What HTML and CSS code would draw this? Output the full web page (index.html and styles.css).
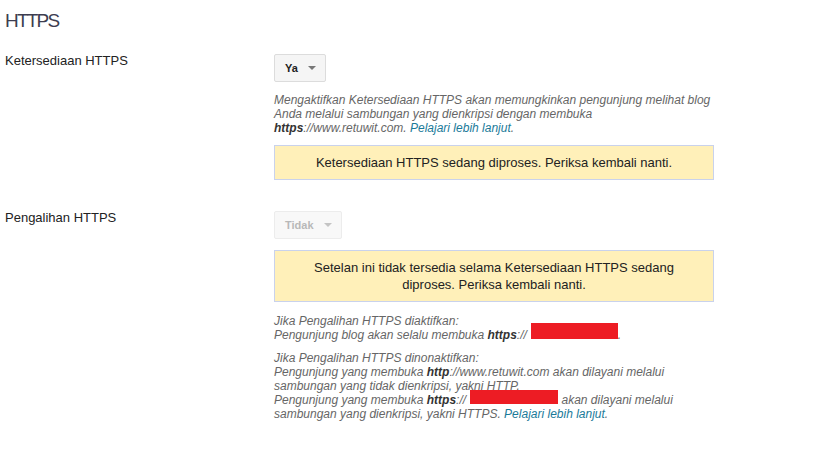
FILE: index.html
```html
<!DOCTYPE html>
<html lang="id">
<head>
    <meta charset="UTF-8">
    <meta name="viewport" content="width=device-width, initial-scale=1.0">
    <title>HTTPS</title>
    <link rel="stylesheet" href="styles.css">
</head>
<body>
    <div class="page">
        <h1>HTTPS</h1>

        <!-- Ketersediaan -->
        <div class="setting">
            <div class="setting-label">Ketersediaan HTTPS</div>
            <div class="setting-body">
                <button class="dropdown">Ya <span class="caret"></span></button>
                <p class="help">Mengaktifkan Ketersediaan HTTPS akan memungkinkan pengunjung melihat blog Anda melalui sambungan yang dienkripsi dengan membuka <b>https</b>://www.retuwit.com. <a href="#">Pelajari lebih lanjut</a>.</p>
                <div class="notice">Ketersediaan HTTPS sedang diproses. Periksa kembali nanti.</div>
            </div>
        </div>

        <!-- Pengalihan -->
        <div class="setting second">
            <div class="setting-label">Pengalihan HTTPS</div>
            <div class="setting-body">
                <button class="dropdown" disabled>Tidak <span class="caret"></span></button>
                <div class="notice">Setelan ini tidak tersedia selama Ketersediaan HTTPS sedang diproses. Periksa kembali nanti.</div>
                <p class="help tight">Jika Pengalihan HTTPS diaktifkan:<br>Pengunjung blog akan selalu membuka <b>https</b>://<span class="redact r1"></span>.</p>
                <p class="help tight">Jika Pengalihan HTTPS dinonaktifkan:<br>Pengunjung yang membuka <b>http</b>://www.retuwit.com akan dilayani melalui sambungan yang tidak dienkripsi, yakni HTTP.<br>Pengunjung yang membuka <b>https</b>://<span class="redact r2"></span> akan dilayani melalui sambungan yang dienkripsi, yakni HTTPS. <a href="#">Pelajari lebih lanjut</a>.</p>
            </div>
        </div>
    </div>
</body>
</html>
```

FILE: styles.css
```css
body {
    margin: 0;
    font-family: "Liberation Sans", Arial, sans-serif;
    font-size: 13px;
    color: #222;
    background: #fff;
}
.page {
    padding: 0 5px;
}
h1 {
    margin: 9px 0 0;
    font-size: 19px;
    line-height: 24px;
    font-weight: normal;
    letter-spacing: -1.8px;
    color: #3d3d4f;
}
.setting {
    display: grid;
    grid-template-columns: 269px 440px;
    margin-top: 21px;
}
.setting.second {
    margin-top: 31px;
}
.setting-label {
    line-height: 14px;
}
.dropdown {
    display: flex;
    align-items: center;
    height: 28px;
    padding: 0 9px 0 10px;
    font-family: "Liberation Sans", Arial, sans-serif;
    font-size: 11px;
    font-weight: bold;
    color: #222;
    background: #f5f5f5;
    border: 1px solid #dcdcdc;
    border-radius: 2px;
}
.dropdown:disabled {
    color: #b8b8b8;
    background: #f8f8f8;
    border-color: #ececec;
}
.caret {
    margin-left: 10px;
    border-left: 4px solid transparent;
    border-right: 4px solid transparent;
    border-top: 4px solid #777;
}
.dropdown:disabled .caret {
    border-top-color: #c4c4c4;
}
.help {
    margin: 11px 0 10px;
    font-size: 12px;
    line-height: 14px;
    font-style: italic;
    color: #666;
}
.help b {
    color: #333;
}
.help a {
    color: #1a7a99;
    text-decoration: none;
}
.help.tight {
    margin: 12px 0 0;
}
.help.tight + .help.tight {
    margin-top: 9px;
}
.notice {
    margin-top: 0;
    padding: 8px 20px;
    line-height: 17px;
    text-align: center;
    background: #fff0b9;
    border: 1px solid #c9d2ec;
}
.dropdown + .notice {
    margin-top: 11px;
}
.redact {
    display: inline-block;
    background: #ed1c24;
}
.r1 {
    width: 87px;
    height: 16px;
    margin: -5px 0 0 4px;
}
.r2 {
    width: 88px;
    height: 14px;
    margin: -3px 0 0 4px;
}
```
